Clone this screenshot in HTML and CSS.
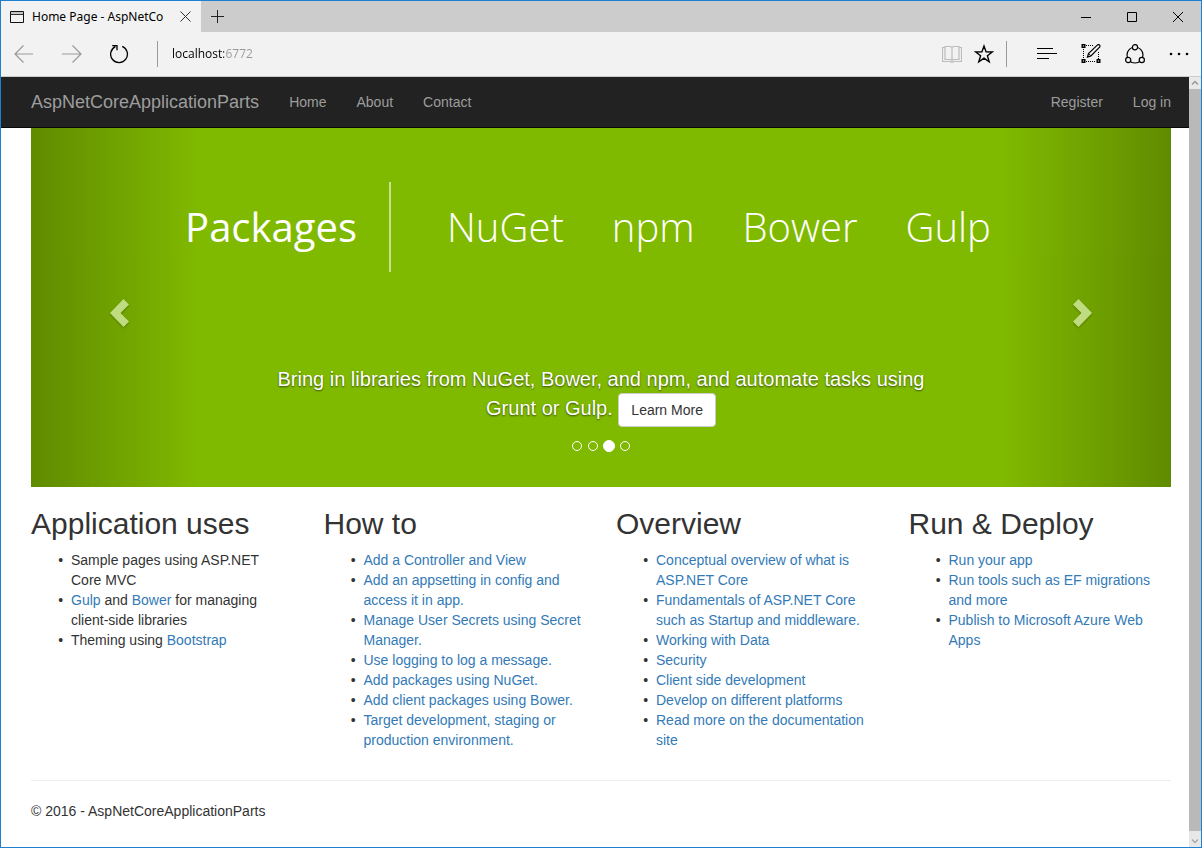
FILE: index.html
```html
<!DOCTYPE html>
<html lang="en">
<head>
<meta charset="utf-8">
<title>Home Page - AspNetCoreApplicationParts</title>
<link rel="stylesheet" href="styles.css">
</head>
<body>
<div class="window">
  <div class="titlebar">
    <div class="tab">
      <svg class="tab-icon" width="14" height="12" viewBox="0 0 14 12" aria-hidden="true"><path d="M.5.5h13v11H.5z" fill="none" stroke="#111"/><path d="M1 2h12M1 3.5h12" stroke="#999"/><path d="M1 3.5h12" stroke="#333"/></svg>
      <span class="tab-title">Home Page - AspNetCo</span>
      <button class="tab-close" aria-label="Close tab"><svg width="11" height="11" viewBox="0 0 11 11"><path d="M.5.5l10 10M10.5.5l-10 10" stroke="#333"/></svg></button>
    </div>
    <button class="tab-new" aria-label="New tab"><svg width="13" height="13" viewBox="0 0 13 13"><path d="M6.5 0v13M0 6.5h13" stroke="#222"/></svg></button>
    <div class="window-controls">
      <button class="window-button" aria-label="Minimize"><svg width="10" height="10" viewBox="0 0 10 10"><path d="M0 5.5h10" stroke="#000"/></svg></button>
      <button class="window-button" aria-label="Maximize"><svg width="10" height="10" viewBox="0 0 10 10"><path d="M.5.5h9v9h-9z" fill="none" stroke="#000"/></svg></button>
      <button class="window-button" aria-label="Close"><svg width="10" height="10" viewBox="0 0 10 10"><path d="M0 0l10 10M10 0L0 10" stroke="#000"/></svg></button>
    </div>
  </div>

  <div class="toolbar">
    <button class="nav-button" aria-label="Back" disabled><svg width="20" height="18" viewBox="0 0 20 18"><path d="M9.500.5L1 9l8.500 8.500M1 9h18" fill="none" stroke="#9a9a9a" stroke-width="1.200"/></svg></button>
    <button class="nav-button" aria-label="Forward" disabled><svg width="20" height="18" viewBox="0 0 20 18"><path d="M10.500.5L19 9l-8.500 8.500M19 9H0" fill="none" stroke="#9a9a9a" stroke-width="1.200"/></svg></button>
    <button class="nav-button" aria-label="Refresh"><svg width="20" height="20" viewBox="0 0 20 20"><path d="M12.200 2.400A8.400 8.400 0 1 1 5.400 2.600M2.200 1.700h4.800v4.600" fill="none" stroke="#000" stroke-width="1.300"/></svg></button>
    <span class="divider"></span>
    <input class="address" type="text" value="localhost:6772" aria-label="Address">
    <button class="page-button" aria-label="Reading view" disabled><svg width="20" height="20" viewBox="0 0 20 20"><path d="M3 2.500h5.500L10 3.500l1.500-1H17v13h-5.500L10 16.500l-1.500-1H3zM10 3.500v13M3 3.500H.5v14h8l1.500 1 1.500-1h8v-14H17" fill="none" stroke="#bcbcbc" stroke-width="1.200"/></svg></button>
    <button class="page-button" aria-label="Add to favorites"><svg width="20" height="20" viewBox="0 0 20 20"><path d="M10 2l2.100 5.900 6.200.1-4.900 3.800 1.800 6L10 14.200l-5.200 3.600 1.800-6L1.700 8l6.200-.1z" fill="none" stroke="#000" stroke-width="1.400"/></svg></button>
    <span class="divider divider-end"></span>
    <button class="hub-button" aria-label="Hub"><svg width="20" height="20" viewBox="0 0 20 20"><path d="M0 4.500h16M0 9.500h20M0 14.500h12" stroke="#000" stroke-width="1.200"/></svg></button>
    <button class="hub-button" aria-label="Make a web note"><svg width="20" height="20" viewBox="0 0 20 20"><path d="M5 1.500h7M5 17.500h10M2.500 5v10M17.500 8v7" stroke="#000" stroke-dasharray="1 1" fill="none"/><path d="M1.200.700h2.600v2.600H1.200zM1.200 15.700h2.600v2.600H1.200zM16.200 15.700h2.600v2.600h-2.600z" fill="#f2f2f2" stroke="#000" stroke-width="1.400"/><path d="M6.500 13l1-3.500L16.500.9q1.300-.7 2.100.2.800.9 0 2l-8.700 8.900z" fill="#f2f2f2" stroke="#000" stroke-width="1.200"/><path d="M7.500 9.700l2.300 2.200" stroke="#000"/></svg></button>
    <button class="hub-button" aria-label="Share"><svg width="20" height="20" viewBox="0 0 20 20" fill="none" stroke="#000" stroke-width="1.200"><circle cx="10" cy="11" r="8"/><g fill="#f2f2f2"><circle cx="10" cy="3.200" r="2.600"/><circle cx="3.200" cy="16" r="2.600"/><circle cx="16.800" cy="16" r="2.600"/></g></svg></button>
    <button class="hub-button" aria-label="More"><svg width="20" height="20" viewBox="0 0 20 20"><g fill="#000"><circle cx="2" cy="10" r="1.300"/><circle cx="10" cy="10" r="1.300"/><circle cx="18" cy="10" r="1.300"/></g></svg></button>
  </div>

  <div class="viewport">
    <nav class="navbar">
      <a class="brand" href="#">AspNetCoreApplicationParts</a>
      <a class="nav-link" href="#">Home</a>
      <a class="nav-link" href="#">About</a>
      <a class="nav-link" href="#">Contact</a>
      <span class="spacer"></span>
      <a class="nav-link" href="#">Register</a>
      <a class="nav-link" href="#">Log in</a>
    </nav>

    <main class="body-content">
      <section class="carousel">
        <div class="banner">
          <strong class="banner-title">Packages</strong>
          <span>NuGet</span><span>npm</span><span>Bower</span><span>Gulp</span>
        </div>
        <p class="caption">Bring in libraries from NuGet, Bower, and npm, and automate tasks using Grunt or Gulp. <a class="learn-more" href="#">Learn More</a></p>
        <div class="indicators">
          <button class="indicator" aria-label="Slide 1"></button>
          <button class="indicator" aria-label="Slide 2"></button>
          <button class="indicator indicator-active" aria-label="Slide 3"></button>
          <button class="indicator" aria-label="Slide 4"></button>
        </div>
        <button class="control control-prev" aria-label="Previous"><svg class="chevron" width="30" height="30" viewBox="0 0 30 30"><path d="M21.500 1L27 6.500 18.500 15 27 23.500 21.500 29 8 15z" fill="#fff"/></svg></button>
        <button class="control control-next" aria-label="Next"><svg class="chevron" width="30" height="30" viewBox="0 0 30 30"><path d="M8.500 1L3 6.500 11.500 15 3 23.500 8.500 29 22 15z" fill="#fff"/></svg></button>
      </section>

      <div class="columns">
        <section>
          <h2>Application uses</h2>
          <ul>
            <li>Sample pages using ASP.NET Core MVC</li>
            <li><a href="#">Gulp</a> and <a href="#">Bower</a> for managing client-side libraries</li>
            <li>Theming using <a href="#">Bootstrap</a></li>
          </ul>
        </section>
        <section>
          <h2>How to</h2>
          <ul>
            <li><a href="#">Add a Controller and View</a></li>
            <li><a href="#">Add an appsetting in config and access it in app.</a></li>
            <li><a href="#">Manage User Secrets using Secret Manager.</a></li>
            <li><a href="#">Use logging to log a message.</a></li>
            <li><a href="#">Add packages using NuGet.</a></li>
            <li><a href="#">Add client packages using Bower.</a></li>
            <li><a href="#">Target development, staging or production environment.</a></li>
          </ul>
        </section>
        <section>
          <h2>Overview</h2>
          <ul>
            <li><a href="#">Conceptual overview of what is ASP.NET Core</a></li>
            <li><a href="#">Fundamentals of ASP.NET Core such as Startup and middleware.</a></li>
            <li><a href="#">Working with Data</a></li>
            <li><a href="#">Security</a></li>
            <li><a href="#">Client side development</a></li>
            <li><a href="#">Develop on different platforms</a></li>
            <li><a href="#">Read more on the documentation site</a></li>
          </ul>
        </section>
        <section>
          <h2>Run &amp; Deploy</h2>
          <ul>
            <li><a href="#">Run your app</a></li>
            <li><a href="#">Run tools such as EF migrations and more</a></li>
            <li><a href="#">Publish to Microsoft Azure Web Apps</a></li>
          </ul>
        </section>
      </div>

      <footer class="footer">
        <p>© 2016 - AspNetCoreApplicationParts</p>
      </footer>
    </main>

    <div class="scrollbar" aria-hidden="true">
      <svg class="scroll-arrow" width="12" height="12" viewBox="0 0 12 12"><path d="M3 7.500l3-3 3 3" fill="none" stroke="#999" stroke-width="1.500"/></svg>
      <span class="scroll-thumb"></span>
      <svg class="scroll-arrow" width="12" height="16" viewBox="0 0 12 16"><path d="M3 8.500l3 3 3-3" fill="none" stroke="#aaa" stroke-width="1.500"/></svg>
    </div>
  </div>
</div>
</body>
</html>
```
FILE: styles.css
```css
* { box-sizing: border-box; }

body {
  margin: 0;
  background: #fff;
  color: #333;
  font: 14px/20px "Liberation Sans", Arial, sans-serif;
}

button {
  display: flex;
  align-items: center;
  justify-content: center;
  padding: 0;
  border: 0;
  background: none;
}

a { color: #337ab7; text-decoration: none; }

.window {
  display: flex;
  flex-direction: column;
  min-height: 100vh;
  border: 1px solid #2080d0;
}

/* Browser frame */
.titlebar {
  display: flex;
  height: 31px;
  background: #ccc;
  font-family: "Noto Sans", sans-serif;
}

.tab {
  display: flex;
  align-items: center;
  width: 200px;
  padding: 0 8px 0 9px;
  background: #f2f2f2;
  color: #000;
}

.tab-title {
  flex: 1;
  margin-left: 8px;
  overflow: hidden;
  font-size: 12px;
  white-space: nowrap;
}

.tab-close { width: 16px; height: 16px; }
.tab-new { width: 32px; }
.window-controls { display: flex; margin-left: auto; }
.window-button { width: 46px; }

.toolbar {
  display: flex;
  align-items: center;
  height: 45px;
  border-bottom: 1px solid #ccc;
  background: #f2f2f2;
}

.nav-button { width: 46px; height: 44px; margin-right: 2px; }
.page-button { width: 32px; height: 44px; }
.hub-button { width: 44px; height: 44px; }
.divider { width: 1px; height: 26px; margin: 0 14px 0 12px; background: #999; }
.divider-end { margin: 0 18px 0 6px; }

.address {
  flex: 1;
  min-width: 0;
  padding: 0;
  border: 0;
  background: linear-gradient(90deg, #000 52px, #999 52px);
  background-clip: text;
  color: transparent;
  font: 12px/20px "Open Sans", sans-serif;
}

/* Page */
.viewport { position: relative; flex: 1; }

.navbar {
  display: flex;
  align-items: center;
  height: 51px;
  padding: 0 15px;
  border-bottom: 1px solid #080808;
  background: #222;
}

.brand, .nav-link { padding: 15px; color: #9d9d9d; }
.brand { font-size: 18px; }
.spacer { flex: 1; }

.body-content { padding: 0 30px; }

.carousel {
  position: relative;
  display: flex;
  flex-direction: column;
  align-items: center;
  height: 359px;
  padding-top: 54px;
  background: #80ba00;
  color: #fff;
}

.banner {
  display: flex;
  align-items: center;
  gap: 48px;
  height: 90px;
  margin-right: 26px;
  font: 300 40px/60px "Open Sans", sans-serif;
}

.banner-title {
  height: 90px;
  margin-right: 8px;
  padding-right: 32px;
  border-right: 2px solid #c8e08c;
  font-weight: 400;
  line-height: 90px;
}

.caption {
  width: 60%;
  margin: 93px 0 0;
  font-size: 20px;
  line-height: 28px;
  text-align: center;
  text-shadow: 0 1px 2px rgba(0, 0, 0, .6);
}

.learn-more {
  display: inline-block;
  padding: 6px 12px;
  border: 1px solid #ccc;
  border-radius: 4px;
  background: #fff;
  color: #333;
  font-size: 14px;
  line-height: 20px;
  text-shadow: none;
  vertical-align: middle;
}

.indicators {
  display: flex;
  align-items: center;
  gap: 5px;
  height: 12px;
  margin-top: 13px;
}

.indicator {
  width: 10px;
  height: 10px;
  margin: 0 1px 0 0;
  border: 1px solid #fff;
  border-radius: 50%;
}

.indicator-active { width: 12px; height: 12px; margin: 0 0 0 -1px; background: #fff; }

.control {
  position: absolute;
  top: 0;
  bottom: 0;
  width: 15%;
  padding-top: 10px;
  opacity: .5;
}

.control-prev {
  left: 0;
  background: linear-gradient(90deg, rgba(0, 0, 0, .5), transparent);
}

.control-next {
  right: 0;
  padding-right: 2px;
  background: linear-gradient(270deg, rgba(0, 0, 0, .5), transparent);
}

.chevron { filter: drop-shadow(0 1px 1px rgba(0, 0, 0, .6)); }

.columns {
  display: grid;
  grid-template-columns: repeat(4, 1fr);
  gap: 30px;
}

h2 {
  margin: 20px 0 10px;
  font-size: 30px;
  font-weight: 500;
  line-height: 33px;
}

ul {
  margin: 0 0 10px;
  padding: 0 4px 0 40px;
  list-style: "•  ";
}

.footer { margin-top: 20px; border-top: 1px solid #eee; }
.footer p { margin: 20px 0 10px; }

.scrollbar {
  position: absolute;
  top: 0;
  right: 0;
  bottom: 0;
  display: flex;
  flex-direction: column;
  width: 12px;
  background: #e8e8e8;
}

.scroll-arrow { flex: none; }
.scroll-thumb { flex: 1; background: #b9b9b9; }
```
